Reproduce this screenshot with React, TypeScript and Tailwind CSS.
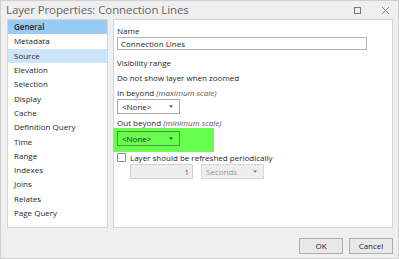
import React from "react";

const items = [
  "General",
  "Metadata",
  "Source",
  "Elevation",
  "Selection",
  "Display",
  "Cache",
  "Definition Query",
  "Time",
  "Range",
  "Indexes",
  "Joins",
  "Relates",
  "Page Query",
];

function Arrow({ color = "#333" }: { color?: string }) {
  return (
    <svg width="4" height="3" viewBox="0 0 4 3">
      <path d="M0 0.5 L4 0.5 L2 2.5 Z" fill={color} />
    </svg>
  );
}

export default function App() {
  return (
    <div
      className="w-[399px] h-[259px] bg-[#efefef] border border-[#cfcfcf] flex flex-col text-[#262626] overflow-hidden"
      style={{ fontFamily: '"Open Sans", "Noto Sans", sans-serif' }}
    >
      {/* title bar */}
      <div className="h-[18px] flex items-center pl-[5px] pr-[8px]">
        <div className="text-[11.5px] text-[#666] leading-none tracking-[-0.1px]">
          Layer Properties: Connection Lines
        </div>
        <div className="ml-auto flex items-center gap-[20px]">
          <div className="w-[7px] h-[7px] border border-[#777]" />
          <svg width="9" height="9" viewBox="0 0 9 9">
            <path d="M1 1 L8 8 M8 1 L1 8" stroke="#777" strokeWidth="0.9" />
          </svg>
        </div>
      </div>

      {/* body */}
      <div className="flex gap-[5px] pl-[6px] pr-[5px] h-[209px]">
        <div className="w-[101px] bg-white border border-[#d4d4d4] flex flex-col">
          {items.map((it, i) => (
            <div
              key={it}
              className={
                "h-[14.3px] flex items-center pl-[6px] text-[8px] leading-none " +
                (i === 0
                  ? "bg-[#99ccf3] font-semibold"
                  : i === 2
                  ? "bg-[#cce4f7]"
                  : "")
              }
            >
              {it}
            </div>
          ))}
        </div>

        <div className="flex-1 bg-white border border-[#d4d4d4] pl-[3px] pt-[6px] flex flex-col text-[8px]">
          <div className="h-[10px] leading-[10px]">Name</div>
          <div className="mt-[1px] w-[250px] h-[13px] border border-[#b4b4b4] flex items-center pl-[3px] leading-none">
            Connection Lines
          </div>
          <div className="mt-[8px] h-[10px] leading-[10px]">Visibility range</div>
          <div className="mt-[5px] h-[10px] leading-[10px]">Do not show layer when zoomed</div>
          <div className="mt-[5px] h-[10px] leading-[10px]">
            In beyond <span className="italic text-[#555]">(maximum scale)</span>
          </div>
          <div className="mt-[1px] w-[63px] h-[15px] border border-[#a8a8a8] flex items-center pl-[4px] pr-[6px] leading-none">
            <span>&lt;None&gt;</span>
            <span className="ml-auto">
              <Arrow />
            </span>
          </div>
          <div className="mt-[4px] h-[10px] leading-[10px]">
            Out beyond <span className="italic text-[#555]">(minimum scale)</span>
          </div>
          <div className="-ml-[4px] w-[101px] h-[24px] bg-[#69ff50] pl-[4px] pt-[3px]">
            <div className="w-[63px] h-[15px] border border-[#4c9a40] flex items-center pl-[4px] pr-[6px] leading-none">
              <span>&lt;None&gt;</span>
              <span className="ml-auto">
                <Arrow />
              </span>
            </div>
          </div>
          <div className="h-[11px] flex items-center gap-[4px]">
            <div className="w-[9px] h-[9px] border border-[#8a8a8a] rounded-[1px] bg-white" />
            <span className="leading-none">Layer should be refreshed periodically</span>
          </div>
          <div className="mt-[1px] pl-[13px] flex gap-[8px]">
            <div className="w-[63px] h-[15px] bg-[#eeeeee] border border-[#d0d0d0] flex items-center justify-end pr-[3px] text-[#555] leading-none">
              1
            </div>
            <div className="w-[63px] h-[15px] bg-[#eeeeee] border border-[#d8d8d8] flex items-center pl-[4px] pr-[6px] text-[#999] leading-none">
              <span>Seconds</span>
              <span className="ml-auto">
                <Arrow color="#666" />
              </span>
            </div>
          </div>
        </div>
      </div>

      {/* footer */}
      <div className="flex justify-end gap-[6px] pr-[5px] pt-[10px]">
        <div className="w-[44px] h-[16px] bg-[#e8e8e8] border border-[#adadad] flex items-center justify-center text-[8px] leading-none">
          OK
        </div>
        <div className="w-[44px] h-[16px] bg-[#e8e8e8] border border-[#adadad] flex items-center justify-center text-[8px] leading-none">
          Cancel
        </div>
      </div>
    </div>
  );
}
